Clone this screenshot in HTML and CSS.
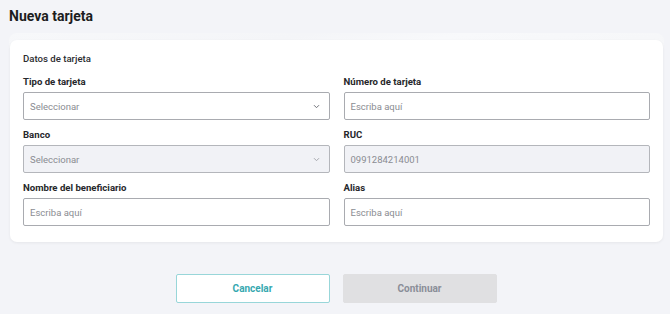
FILE: index.html
```html
<!DOCTYPE html>
<html lang="es">
<head>
<meta charset="utf-8">
<title>Nueva tarjeta</title>
<link rel="stylesheet" href="styles.css">
</head>
<body>
<main class="page">
  <h1 class="title">Nueva tarjeta</h1>
  <section class="card-wrap">
    <div class="card-back"></div>
    <div class="card">
      <h2 class="section-title">Datos de tarjeta</h2>
      <div class="grid">
        <div class="field">
          <label class="label">Tipo de tarjeta</label>
          <div class="control select">
            <span class="placeholder">Seleccionar</span>
            <svg class="chev" width="7" height="5" viewBox="0 0 7 5"><path d="M1 1.2l2.5 2.5 2.5-2.5" fill="none" stroke="#6f7178" stroke-width="1"/></svg>
          </div>
        </div>
        <div class="field">
          <label class="label">Número de tarjeta</label>
          <div class="control"><span class="placeholder">Escriba aquí</span></div>
        </div>
        <div class="field">
          <label class="label">Banco</label>
          <div class="control select disabled">
            <span class="placeholder">Seleccionar</span>
            <svg class="chev" width="7" height="5" viewBox="0 0 7 5"><path d="M1 1.2l2.5 2.5 2.5-2.5" fill="none" stroke="#a6a8ae" stroke-width="1"/></svg>
          </div>
        </div>
        <div class="field">
          <label class="label">RUC</label>
          <div class="control disabled"><span class="placeholder">0991284214001</span></div>
        </div>
        <div class="field">
          <label class="label">Nombre del beneficiario</label>
          <div class="control"><span class="placeholder">Escriba aquí</span></div>
        </div>
        <div class="field">
          <label class="label">Alias</label>
          <div class="control"><span class="placeholder">Escriba aquí</span></div>
        </div>
      </div>
    </div>
  </section>
  <div class="actions">
    <button class="btn btn-outline">Cancelar</button>
    <button class="btn btn-disabled">Continuar</button>
  </div>
</main>
</body>
</html>
```
FILE: styles.css
```css
html, body {
  margin: 0;
  padding: 0;
  background: #f3f4f8;
  font-family: Roboto, "Liberation Sans", sans-serif;
  color: #222;
}
.page {
  width: 670px;
  height: 314px;
  box-sizing: border-box;
  padding: 6px 7px 0 10px;
}
.title {
  margin: 0 0 0 -1px;
  font-size: 14px;
  line-height: 20px;
  font-weight: 700;
  color: #1c1d21;
}
.card-wrap {
  position: relative;
  margin-top: 14px;
}
.card-back {
  position: absolute;
  left: -1px;
  right: -1px;
  top: -7px;
  height: 20px;
  border-radius: 8px;
  background: linear-gradient(170deg, #f7f8fa 0%, #f4f5f8 40%, #f8f9fb 60%, #f5f6f8 100%);
}
.card {
  position: relative;
  background: #fff;
  border-radius: 7px;
  box-shadow: 0 1px 3px rgba(0, 0, 0, 0.06);
  padding: 12px 13px 16px 13px;
}
.section-title {
  margin: 0;
  font-size: 9.6px;
  line-height: 14px;
  font-weight: 500;
  color: #2b2c30;
}
.grid {
  display: grid;
  grid-template-columns: 1fr 1fr;
  column-gap: 14px;
  row-gap: 8px;
  margin-top: 9px;
}
.field {
  display: flex;
  flex-direction: column;
  gap: 3px;
}
.label {
  font-size: 9.6px;
  line-height: 14px;
  font-weight: 700;
  color: #26272b;
}
.control {
  height: 28px;
  box-sizing: border-box;
  border: 1px solid #a9abb0;
  border-radius: 2px;
  background: #fff;
  display: flex;
  align-items: center;
  justify-content: space-between;
  padding: 0 9px 0 6px;
}
.control.disabled {
  background: #f1f2f6;
  border-color: #b4b6bb;
}
.placeholder {
  font-size: 9.5px;
  color: #8a8c92;
}
.chev {
  display: block;
}
.actions {
  display: flex;
  justify-content: center;
  gap: 13px;
  margin-top: 32px;
  padding-right: 1px;
}
.btn {
  width: 154px;
  height: 29px;
  box-sizing: border-box;
  border-radius: 2px;
  font-family: Roboto, "Liberation Sans", sans-serif;
  font-size: 10px;
  font-weight: 700;
}
.btn-outline {
  background: #fff;
  border: 1px solid #98d6d9;
  color: #36a8b0;
}
.btn-disabled {
  background: #e0e0e2;
  border: 1px solid #e0e0e2;
  color: #8a8e98;
}
```
